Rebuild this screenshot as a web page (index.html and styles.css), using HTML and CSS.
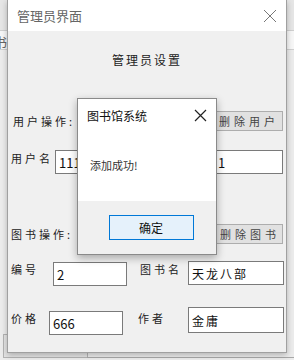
FILE: index.html
```html
<!DOCTYPE html>
<html lang="zh-CN">
<head>
  <meta charset="UTF-8" />
  <meta name="viewport" content="width=device-width, initial-scale=1.0" />
  <title>管理员界面</title>
  <link rel="stylesheet" href="styles.css">
</head>
<body>
  <!-- window behind -->
  <div class="back">
    <div class="back-top"></div>
    <div class="back-band">书</div>
    <div class="back-btn"></div>
    <div class="back-line"></div>
  </div>

  <div class="window">
    <div class="titlebar">
      <span class="title">管理员界面</span>
      <svg class="close" width="14" height="14" viewBox="0 0 14 14">
        <path d="M1 1L13 13M13 1L1 13" stroke="#777" stroke-width="1" fill="none" />
      </svg>
    </div>

    <div class="content">
      <h2 class="heading">管理员设置</h2>

      <div class="row row-op">
        <span class="label">用户操作:</span>
        <button class="btn btn-right">删除用户</button>
      </div>

      <div class="row row-user">
        <span class="label">用户名</span>
        <input class="field f-user" value="111" />
        <input class="field f-pass" value="1" />
      </div>

      <div class="row row-op2">
        <span class="label">图书操作:</span>
        <button class="btn btn-right2">删除图书</button>
      </div>

      <div class="row row-book">
        <span class="label">编号</span>
        <input class="field f-id" value="2" />
        <span class="label label-mid2">图书名</span>
        <input class="field f-name serif" value="天龙八部" />
      </div>

      <div class="row row-price">
        <span class="label">价格</span>
        <input class="field f-price" value="666" />
        <span class="label label-mid3">作者</span>
        <input class="field f-author serif" value="金庸" />
      </div>
    </div>
  </div>

  <div class="dialog">
    <div class="dlg-title">
      <span>图书馆系统</span>
      <svg width="13" height="13" viewBox="0 0 13 13">
        <path d="M1 1L12 12M12 1L1 12" stroke="#222" stroke-width="1.2" fill="none" />
      </svg>
    </div>
    <div class="dlg-body">添加成功!</div>
    <div class="dlg-foot">
      <button class="ok">确定</button>
    </div>
  </div>
</body>
</html>
```

FILE: styles.css
```css
body {
  margin: 0;
  width: 294px;
  height: 360px;
  overflow: hidden;
  position: relative;
  background-color: #ececec;
  font-family: "Noto Sans CJK SC", sans-serif;
}

.back-top {
  height: 30px;
  background-color: #e6e6e6;
  border-bottom: 1px solid #cfcfcf;
}

.back-band {
  height: 18px;
  background-color: #f7f7f7;
  border-bottom: 1px solid #d0d0d0;
  font-size: 13px;
  line-height: 22px;
  color: #666;
  text-indent: -6px;
}

.back-btn {
  position: absolute;
  left: 3px;
  top: 334px;
  width: 83px;
  height: 22px;
  border: 1px solid #b4b4b4;
  background-color: #e4e4e4;
}

.back-line {
  position: absolute;
  left: 87px;
  right: 0;
  top: 357px;
  border-top: 1px solid #a8a8a8;
}

.window {
  position: absolute;
  left: 7px;
  top: 0;
  width: 278px;
  height: 352px;
  background-color: #f0f0f0;
  border: 1px solid #a0a0a0;
  border-top: none;
  box-shadow: 0 2px 6px rgba(0,0,0,0.25);
}

.titlebar {
  height: 31px;
  background-color: #fff;
  display: flex;
  align-items: center;
  justify-content: space-between;
  padding: 0 9px 0 9px;
}

.title {
  font-size: 13px;
  color: #666;
}

.content {
  padding-top: 21px;
}

.heading {
  margin: 0;
  text-align: center;
  font-size: 12px;
  font-weight: normal;
  letter-spacing: 2px;
  line-height: 16px;
  color: #222;
}

.row {
  display: flex;
  align-items: flex-start;
}

.label {
  font-size: 11px;
  letter-spacing: 3px;
  color: #222;
  line-height: 14px;
}

.btn {
  height: 20px;
  border: 1px solid #adadad;
  background-color: #e1e1e1;
  font-family: "Noto Sans CJK SC", sans-serif;
  font-size: 11px;
  letter-spacing: 4px;
  color: #444;
  padding: 0;
}

.row-op {
  margin-top: 43px;
  padding-left: 5px;
  align-items: center;
}

.btn-right {
  margin-left: auto;
  margin-right: 3px;
  width: 78px;
  text-align: right;
  padding-right: 3px;
}

.field {
  height: 24px;
  box-sizing: border-box;
  border: 1px solid #7a7a7a;
  background-color: #fff;
  font-family: "Noto Sans CJK SC", sans-serif;
  font-size: 13px;
  padding: 0 3px;
  color: #111;
}

.serif {
  font-size: 12px;
  letter-spacing: 2px;
}

.row-user {
  margin-top: 19px;
  padding-left: 3px;
}

.row-user .label {
  margin-top: 1px;
}

.f-user {
  margin-left: 2px;
  width: 74px;
}

.f-pass {
  margin-left: auto;
  margin-right: 3px;
  width: 69px;
}

.row-op2 {
  margin-top: 50px;
  padding-left: 3px;
  align-items: center;
}

.btn-right2 {
  margin-left: auto;
  margin-right: 3px;
  width: 76px;
  text-align: right;
  padding-right: 2px;
}

.row-book {
  margin-top: 17px;
  padding-left: 3px;
}

.row-book .label {
  margin-top: 1px;
}

.f-id {
  margin-left: 14px;
  width: 74px;
  margin-top: 1px;
}

.label-mid2 {
  margin-left: 13px;
}

.f-name {
  margin-left: auto;
  margin-right: 2px;
  width: 96px;
}

.row-price {
  margin-top: 21px;
  padding-left: 3px;
}

.row-price .label {
  margin-top: 4px;
}

.f-price {
  margin-left: 10px;
  width: 74px;
  margin-top: 4px;
}

.label-mid3 {
  margin-left: 15px;
  margin-top: 4px;
}

.f-author {
  margin-left: auto;
  margin-right: 2px;
  width: 96px;
  height: 26px;
}

.dialog {
  position: absolute;
  left: 77px;
  top: 98px;
  width: 138px;
  height: 155px;
  background-color: #fff;
  border: 1px solid #8a8a8a;
  box-shadow: 0 3px 8px rgba(0,0,0,0.3);
  display: flex;
  flex-direction: column;
}

.dlg-title {
  height: 32px;
  display: flex;
  align-items: center;
  justify-content: space-between;
  padding: 0 9px 0 9px;
  font-size: 12px;
  color: #111;
}

.dlg-body {
  flex: 1;
  padding-left: 12px;
  padding-top: 26px;
  font-size: 11px;
  color: #333;
}

.dlg-foot {
  height: 53px;
  background-color: #f0f0f0;
  display: flex;
  align-items: center;
  justify-content: center;
  padding-left: 8px;
}

.ok {
  width: 85px;
  height: 25px;
  background-color: #e5f1fb;
  border: 1px solid #0078d7;
  font-family: "Noto Sans CJK SC", sans-serif;
  font-size: 12px;
  color: #111;
  padding: 0;
}
```
